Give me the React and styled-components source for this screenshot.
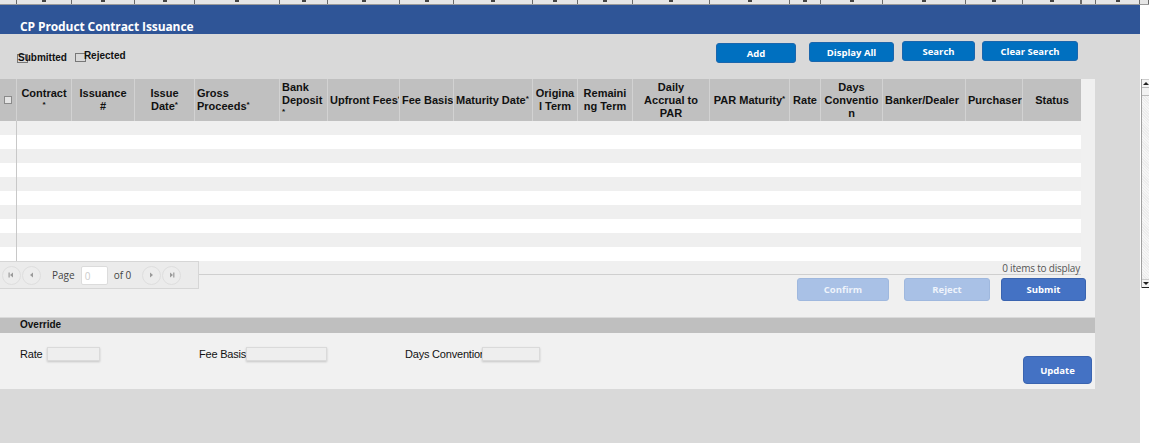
import React from "react";
import styled, { createGlobalStyle } from "styled-components";

const GlobalStyle = createGlobalStyle`
	html, body {
		margin: 0;
		padding: 0;
		background: #d9d9d9;
		overflow: hidden;
	}
	* {
		box-sizing: border-box;
	}
`

const COLS = [
	{ w: 17, check: true },
	{ w: 55, lines: ['Contract', '*'], align: 'center' },
	{ w: 63, lines: ['Issuance', '#'], align: 'center' },
	{ w: 60, lines: ['Issue', 'Date*'], align: 'center' },
	{ w: 85, lines: ['Gross', 'Proceeds*'], align: 'left' },
	{ w: 48, lines: ['Bank', 'Deposit', '*'], align: 'left' },
	{ w: 72, lines: ['Upfront Fees*'], align: 'left' },
	{ w: 54, lines: ['Fee Basis'], align: 'left' },
	{ w: 79, lines: ['Maturity Date*'], align: 'left' },
	{ w: 45, lines: ['Origina', 'l Term'], align: 'center' },
	{ w: 55, lines: ['Remaini', 'ng Term'], align: 'center' },
	{ w: 77, lines: ['Daily', 'Accrual to', 'PAR'], align: 'center' },
	{ w: 80, lines: ['PAR Maturity*'], align: 'center' },
	{ w: 31, lines: ['Rate'], align: 'center' },
	{ w: 62, lines: ['Days', 'Conventio', 'n'], align: 'center' },
	{ w: 83, lines: ['Banker/Dealer'], align: 'left' },
	{ w: 57, lines: ['Purchaser'], align: 'left' },
	{ w: 58, lines: ['Status'], align: 'center' },
]

const STRIP = [...COLS.map(c => c.w), 1, 14, 44, 9]

const Page = styled.div`
	width: 1149px;
	height: 443px;
	display: flex;
	flex-direction: column;
`

const TopStrip = styled.div`
	display: flex;
	height: 5px;
	background: #e6e6e6;
	border-bottom: 1px solid #9a9a9a;
`

const StripCell = styled.div`
	width: ${p => p.w}px;
	flex: none;
	border-right: 1px solid #6a6a6a;
	display: flex;
	justify-content: center;
	&::after {
		content: '';
		width: 4px;
		height: 2px;
		background: #444;
		display: ${p => (p.w > 20 ? 'block' : 'none')};
	}
`

const Body = styled.div`
	flex: 1;
	display: flex;
`

const Main = styled.div`
	width: 1140px;
	display: flex;
	flex-direction: column;
`

const Gutter = styled.div`
	flex: 1;
	background: #fff;
	display: flex;
	flex-direction: column;
	padding-top: 74px;
	padding-left: 1px;
`

const ScrollBar = styled.div`
	height: 209px;
	border-left: 1px solid #a0a0a0;
	display: flex;
	flex-direction: column;
	background: repeating-linear-gradient(45deg, #f6f6f6 0 1px, #ececec 1px 2px);
`

const ScrollArrow = styled.div`
	height: 9px;
	background: #f4f4f4;
	border-bottom: 1px solid ${p => (p.down ? '#222' : '#bbb')};
	border-top: 1px solid #ccc;
	display: flex;
	align-items: center;
	justify-content: center;
	&::before {
		content: '';
		border-left: 3px solid transparent;
		border-right: 3px solid transparent;
		${p => (p.down ? 'border-top: 3px solid #222;' : 'border-bottom: 3px solid #222;')}
	}
`

const ScrollThumb = styled.div`
	height: 8px;
	background: #f2f2f2;
	border-bottom: 1px solid #bbb;
`

const ScrollTrack = styled.div`
	flex: 1;
`

const TitleBar = styled.div`
	height: 29px;
	background: #2f5597;
	color: #fff;
	font-family: "Open Sans", "Liberation Sans", sans-serif;
	font-weight: 700;
	font-size: 12px;
	padding: 13px 0 0 20px;
	letter-spacing: -0.1px;
`

const Toolbar = styled.div`
	height: 45px;
	display: flex;
	align-items: flex-start;
	padding: 7px 0 0 17px;
`

const Checks = styled.div`
	display: flex;
	align-items: flex-start;
	gap: 8px;
	padding-top: 11px;
	width: 699px;
`

const CheckItem = styled.label`
	display: inline-flex;
	align-items: flex-start;
	font-family: "Liberation Sans", Arial, sans-serif;
	font-weight: 700;
	font-size: 10px;
	color: #111;
	margin-top: ${p => p.shift}px;
`

const Box = styled.span`
	width: 11px;
	height: 9px;
	border: 1px solid #777;
	margin-top: ${p => p.drop}px;
	margin-right: ${p => p.overlap}px;
	flex: none;
`

const ToolButtons = styled.div`
	display: flex;
	align-items: flex-start;
`

const BlueButton = styled.button`
	width: ${p => p.w}px;
	height: ${p => p.h || 20}px;
	margin-left: ${p => p.gap || 0}px;
	margin-top: ${p => p.top || 0}px;
	background: #0070c0;
	border: 1px solid #1a66ad;
	border-radius: 3px;
	color: #fff;
	font-family: "Open Sans", "Liberation Sans", sans-serif;
	font-weight: 700;
	font-size: 9.5px;
	padding: 0;
	cursor: pointer;
`

const GridPanel = styled.div`
	width: 1095px;
	height: 239px;
	background: #f0f0f0;
	border-bottom: 1px solid #dadada;
	display: flex;
	flex-direction: column;
`

const Grid = styled.div`
	width: 1081px;
	display: flex;
	flex-direction: column;
`

const HeaderRow = styled.div`
	display: flex;
	height: 42px;
	background: #c0c0c0;
`

const HeadCell = styled.div`
	width: ${p => p.w}px;
	flex: none;
	border-right: 1px solid #d2d2d2;
	display: flex;
	flex-direction: column;
	justify-content: center;
	align-items: ${p => (p.align === 'left' ? 'flex-start' : 'center')};
	text-align: ${p => p.align};
	padding-left: ${p => (p.align === 'left' ? 2 : 0)}px;
	font-family: "Liberation Sans", Arial, sans-serif;
	font-weight: 700;
	font-size: 11px;
	line-height: 13px;
	color: #111;
	white-space: nowrap;
	overflow: hidden;
	&:last-child {
		border-right: none;
	}
`

const HeadCheck = styled.span`
	width: 8px;
	height: 8px;
	border: 1px solid #8a8a8a;
	background: #e4e4e4;
`

const Req = styled.span`
	font-size: 8px;
	vertical-align: 3px;
	line-height: 0;
`

const DataRow = styled.div`
	display: flex;
	height: 14px;
	background: ${p => (p.odd ? '#fff' : '#efefef')};
`

const DataCell = styled.div`
	width: ${p => p.w}px;
	flex: none;
	border-right: ${p => (p.first ? '1px solid #c8c8c8' : 'none')};
`

const Footer = styled.div`
	display: flex;
	align-items: flex-start;
`

const Pager = styled.div`
	width: 199px;
	height: 28px;
	background: #ebebeb;
	border: 1px solid #d6d6d6;
	border-left: none;
	display: flex;
	align-items: center;
	padding-left: 1px;
	font-family: "Open Sans", "Liberation Sans", sans-serif;
	font-size: 10px;
	color: #444;
`

const PagerBtn = styled.span`
	width: 19px;
	height: 19px;
	border-radius: 50%;
	border: 1px solid #dedede;
	background: #ececec;
	display: flex;
	align-items: center;
	justify-content: center;
	margin-left: ${p => p.gap || 1}px;
	color: #9a9a9a;
`

const PageLabel = styled.span`
	margin-left: ${p => p.gap}px;
`

const PageInput = styled.span`
	width: 27px;
	height: 19px;
	background: #fff;
	border: 1px solid #dcdcdc;
	border-radius: 2px;
	margin-left: 6px;
	color: #ccc;
	padding: 2px 0 0 3px;
	font-size: 10px;
`

const FooterRight = styled.div`
	flex: 1;
	display: flex;
	flex-direction: column;
`

const InfoBar = styled.div`
	height: 14px;
	border-bottom: 1px solid #cfcfcf;
	text-align: right;
	font-family: "Open Sans", "Liberation Sans", sans-serif;
	font-size: 10px;
	line-height: 14px;
	color: #555;
	padding-right: 1px;
	letter-spacing: -0.2px;
`

const Actions = styled.div`
	display: flex;
	justify-content: flex-end;
	margin-top: 3px;
	margin-right: -5px;
`

const ActionButton = styled.button`
	width: ${p => p.w}px;
	height: 23px;
	margin-left: ${p => p.gap}px;
	background: ${p => (p.disabled ? '#a9c1e6' : '#4472c4')};
	border: 1px solid ${p => (p.disabled ? '#9fb8de' : '#3a64b0')};
	border-radius: 3px;
	color: ${p => (p.disabled ? '#eef3fb' : '#fff')};
	font-family: "Open Sans", "Liberation Sans", sans-serif;
	font-weight: 700;
	font-size: 9.5px;
	padding: 0;
`

const SectionBar = styled.div`
	width: 1095px;
	height: 15px;
	background: #bfbfbf;
	padding: 1px 0 0 20px;
	font-family: "Liberation Sans", Arial, sans-serif;
	font-weight: 700;
	font-size: 10px;
	color: #111;
`

const OverrideBody = styled.div`
	width: 1095px;
	height: 56px;
	background: #f1f1f1;
	display: flex;
	align-items: flex-start;
	padding: 14px 3px 0 20px;
`

const Field = styled.div`
	width: ${p => p.w}px;
	display: flex;
	align-items: center;
	flex: none;
	font-family: "Liberation Sans", Arial, sans-serif;
	font-size: 11px;
	letter-spacing: -0.2px;
	color: #111;
`

const FieldLabel = styled.span`
	width: ${p => p.w}px;
	flex: none;
	overflow: hidden;
	white-space: nowrap;
`

const FieldInput = styled.span`
	width: ${p => p.w}px;
	height: 14px;
	background: #eeeeee;
	border: 1px solid #dadada;
	box-shadow: 0 1px 2px rgba(0, 0, 0, 0.18);
`

const UpdateButton = styled.button`
	width: 69px;
	height: 28px;
	margin-left: auto;
	margin-top: 9px;
	background: #4472c4;
	border: 1px solid #3a64b0;
	border-radius: 4px;
	color: #fff;
	font-family: "Open Sans", "Liberation Sans", sans-serif;
	font-weight: 700;
	font-size: 9.5px;
	padding: 0;
`

function Arrow({ dir, bar }) {
	const left = dir === 'left'
	return (
		<svg width="7" height="6" viewBox="0 0 7 6">
			{left ? <polygon points="5,0.5 5,5.5 2,3" fill="#9a9a9a" /> : <polygon points="2,0.5 2,5.5 5,3" fill="#9a9a9a" />}
			{bar && <rect x={left ? 0.5 : 5.2} y="0.5" width="1.2" height="5" fill="#9a9a9a" />}
		</svg>
	)
}

function HeaderText({ lines }) {
	return lines.map((line, i) => {
		if (line === '*') return <div key={i}><Req>*</Req></div>
		if (line.endsWith('*')) return <div key={i}>{line.slice(0, -1)}<Req>*</Req></div>
		return <div key={i}>{line}</div>
	})
}

export default function App() {
	const rows = Array.from({ length: 10 }, (_, i) => i)
	return (
		<Page>
			<GlobalStyle />
			<TopStrip>
				{STRIP.map((w, i) => <StripCell key={i} w={w} />)}
			</TopStrip>
			<Body>
				<Main>
					<TitleBar>CP Product Contract Issuance</TitleBar>
					<Toolbar>
						<Checks>
							<CheckItem shift={0}>
								<Box drop={2} overlap={-10} />
								Submitted
							</CheckItem>
							<CheckItem shift={-2}>
								<Box drop={3} overlap={-2} />
								Rejected
							</CheckItem>
						</Checks>
						<ToolButtons>
							<BlueButton w={80} top={2}>Add</BlueButton>
							<BlueButton w={85} gap={13} top={1}>Display All</BlueButton>
							<BlueButton w={73} gap={8}>Search</BlueButton>
							<BlueButton w={96} gap={7}>Clear Search</BlueButton>
						</ToolButtons>
					</Toolbar>
					<GridPanel>
						<Grid>
							<HeaderRow>
								{COLS.map((c, i) => (
									<HeadCell key={i} w={c.w} align={c.align || 'center'}>
										{c.check ? <HeadCheck /> : <HeaderText lines={c.lines} />}
									</HeadCell>
								))}
							</HeaderRow>
							{rows.map(r => (
								<DataRow key={r} odd={r % 2 === 1}>
									<DataCell w={17} first />
								</DataRow>
							))}
							<Footer>
								<Pager>
									<PagerBtn><Arrow dir="left" bar /></PagerBtn>
									<PagerBtn><Arrow dir="left" /></PagerBtn>
									<PageLabel gap={11}>Page</PageLabel>
									<PageInput>0</PageInput>
									<PageLabel gap={6}>of 0</PageLabel>
									<PagerBtn gap={11}><Arrow dir="right" /></PagerBtn>
									<PagerBtn><Arrow dir="right" bar /></PagerBtn>
								</Pager>
								<FooterRight>
									<InfoBar>0 items to display</InfoBar>
									<Actions>
										<ActionButton w={92} gap={0} disabled>Confirm</ActionButton>
										<ActionButton w={86} gap={15} disabled>Reject</ActionButton>
										<ActionButton w={85} gap={11}>Submit</ActionButton>
									</Actions>
								</FooterRight>
							</Footer>
						</Grid>
					</GridPanel>
					<SectionBar>Override</SectionBar>
					<OverrideBody>
						<Field w={179}>
							<FieldLabel w={27}>Rate</FieldLabel>
							<FieldInput w={53} />
						</Field>
						<Field w={206}>
							<FieldLabel w={47}>Fee Basis</FieldLabel>
							<FieldInput w={81} />
						</Field>
						<Field w={140}>
							<FieldLabel w={77}>Days Convention</FieldLabel>
							<FieldInput w={58} />
						</Field>
						<UpdateButton>Update</UpdateButton>
					</OverrideBody>
				</Main>
				<Gutter>
					<ScrollBar>
						<ScrollArrow />
						<ScrollThumb />
						<ScrollTrack />
						<ScrollArrow down />
					</ScrollBar>
				</Gutter>
			</Body>
		</Page>
	)
}
